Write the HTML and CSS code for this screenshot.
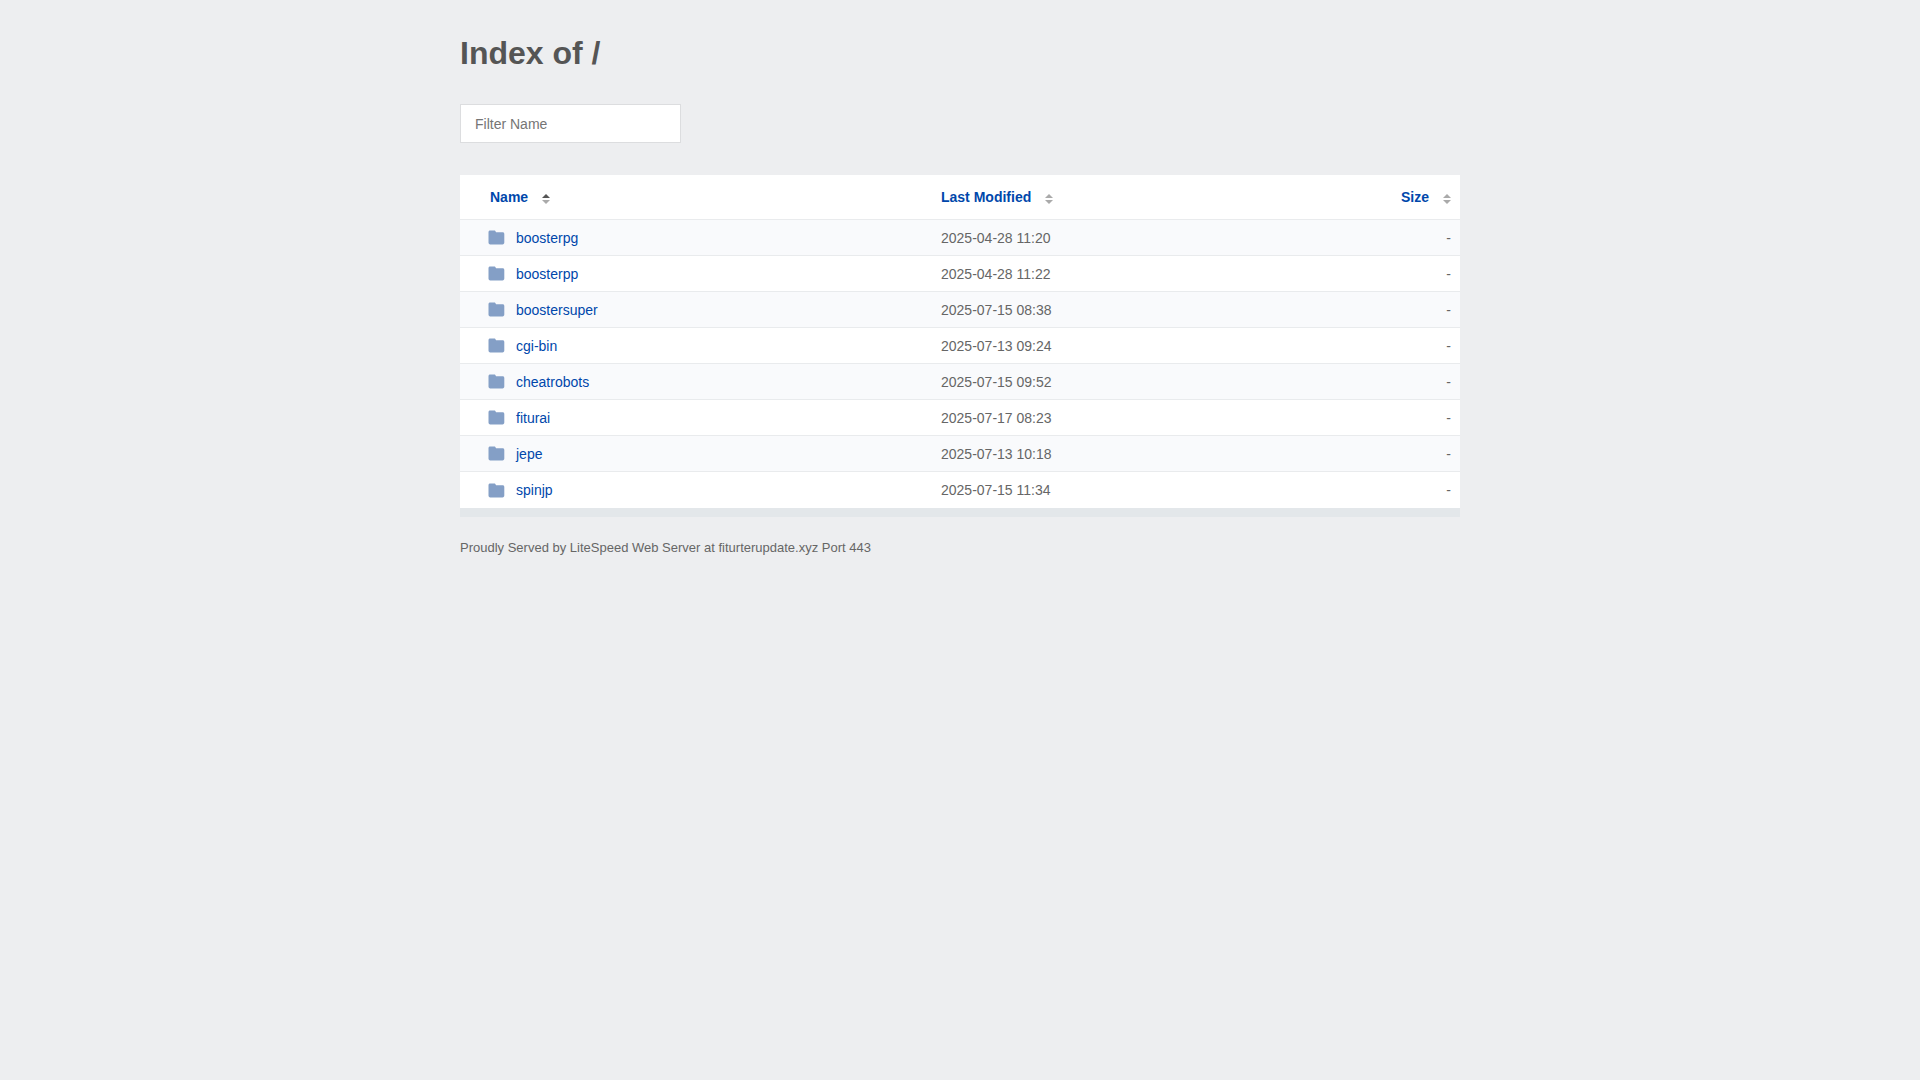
FILE: index.html
```html
<!DOCTYPE html>
<html lang="en">
<head>
  <meta charset="UTF-8">
  <title>Index of /</title>
  <meta name="viewport" content="width=device-width, initial-scale=1.0">
  <link rel="stylesheet" href="styles.css">
</head>
<body>
  <svg class="sprite" aria-hidden="true">
    <symbol id="folder" viewBox="0 0 17 15">
      <path d="M2.2.5h4.100c.8 0 1 .3 1.300.9l.5.8h6.400c1.200 0 1.800.6 1.800 1.700v8.700c0 1.200-.6 1.800-1.800 1.800H2.300C1.100 14.400.5 13.800.5 12.600V2.200C.5 1.100 1.100.5 2.200.5z"/>
    </symbol>
    <symbol id="sort" viewBox="0 0 8 10">
      <path class="up" d="M4 0l4 4H0z"/>
      <path class="down" d="M0 6h8l-4 4z"/>
    </symbol>
  </svg>

  <div class="content">
    <h1>Index of /</h1>

    <input type="text" id="filter" class="filter" placeholder="Filter Name" aria-label="Filter Name">

    <table id="list">
      <thead>
        <tr>
          <th class="name"><a href="#">Name</a><svg class="sort asc"><use href="#sort"/></svg></th>
          <th class="modified"><a href="#">Last Modified</a><svg class="sort"><use href="#sort"/></svg></th>
          <th class="size"><a href="#">Size</a><svg class="sort"><use href="#sort"/></svg></th>
        </tr>
      </thead>
      <tbody>
        <tr>
          <td class="name"><a href="#"><svg class="folder"><use href="#folder"/></svg>boosterpg</a></td>
          <td>2025-04-28 11:20</td>
          <td class="size">-</td>
        </tr>
        <tr>
          <td class="name"><a href="#"><svg class="folder"><use href="#folder"/></svg>boosterpp</a></td>
          <td>2025-04-28 11:22</td>
          <td class="size">-</td>
        </tr>
        <tr>
          <td class="name"><a href="#"><svg class="folder"><use href="#folder"/></svg>boostersuper</a></td>
          <td>2025-07-15 08:38</td>
          <td class="size">-</td>
        </tr>
        <tr>
          <td class="name"><a href="#"><svg class="folder"><use href="#folder"/></svg>cgi-bin</a></td>
          <td>2025-07-13 09:24</td>
          <td class="size">-</td>
        </tr>
        <tr>
          <td class="name"><a href="#"><svg class="folder"><use href="#folder"/></svg>cheatrobots</a></td>
          <td>2025-07-15 09:52</td>
          <td class="size">-</td>
        </tr>
        <tr>
          <td class="name"><a href="#"><svg class="folder"><use href="#folder"/></svg>fiturai</a></td>
          <td>2025-07-17 08:23</td>
          <td class="size">-</td>
        </tr>
        <tr>
          <td class="name"><a href="#"><svg class="folder"><use href="#folder"/></svg>jepe</a></td>
          <td>2025-07-13 10:18</td>
          <td class="size">-</td>
        </tr>
        <tr>
          <td class="name"><a href="#"><svg class="folder"><use href="#folder"/></svg>spinjp</a></td>
          <td>2025-07-15 11:34</td>
          <td class="size">-</td>
        </tr>
      </tbody>
    </table>

    <footer>Proudly Served by LiteSpeed Web Server at fiturterupdate.xyz Port 443</footer>
  </div>

  <script>
    const rows = document.querySelectorAll('#list tbody tr');

    document.getElementById('filter').addEventListener('input', function() {
      const text = this.value.trim().toLowerCase();

      rows.forEach(function(row) {
        const name = row.querySelector('.name').textContent.toLowerCase();
        row.hidden = !name.includes(text);
      });
    });
  </script>
</body>
</html>
```
FILE: styles.css
```css
* {
  box-sizing: border-box;
}

body {
  margin: 0;
  padding: 33px 20px;
  background: #edeef0;
  color: #666;
  font-family: "Liberation Sans", Arial, sans-serif;
  font-size: 14px;
  line-height: 20px;
}

a {
  color: #0047ab;
  text-decoration: none;
}

a:hover {
  text-decoration: underline;
}

.sprite {
  display: none;
}

.content {
  max-width: 1000px;
  margin: 0 auto;
}

h1 {
  margin: 0 0 31px;
  color: #555;
  font-size: 32px;
  line-height: 40px;
}

.filter {
  display: block;
  width: 221px;
  max-width: 100%;
  height: 39px;
  margin-bottom: 32px;
  padding: 0 14px;
  border: 1px solid #dcdddf;
  background: #fff;
  color: #555;
  font: inherit;
}

.filter::placeholder {
  color: #757575;
}

table {
  width: 100%;
  table-layout: fixed;
  border-spacing: 0;
  border-bottom: 9px solid #e3e7ea;
  background: #fff;
}

th,
td {
  height: 36px;
  padding: 0 9px 0 11px;
  border-bottom: 1px solid #e9ebed;
  text-align: left;
}

th {
  height: 45px;
}

tbody tr:nth-child(odd) {
  background: #f9fafc;
}

tbody tr:last-child td {
  border-bottom: 0;
}

th.name {
  width: 47%;
  padding-left: 30px;
}

td.name {
  padding-left: 28px;
}

th.modified {
  width: 33%;
}

.size {
  text-align: right;
}

td.name a {
  display: flex;
  align-items: center;
}

.folder {
  width: 17px;
  height: 15px;
  margin-right: 11px;
  fill: #849fc6;
}

.sort {
  --up: #aaa;
  width: 8px;
  height: 10px;
  margin-left: 14px;
  vertical-align: -2px;
}

.sort.asc {
  --up: #555;
}

.up {
  fill: var(--up);
}

.down {
  fill: #aaa;
}

footer {
  padding: 21px 0;
  font-size: 13px;
}
```
